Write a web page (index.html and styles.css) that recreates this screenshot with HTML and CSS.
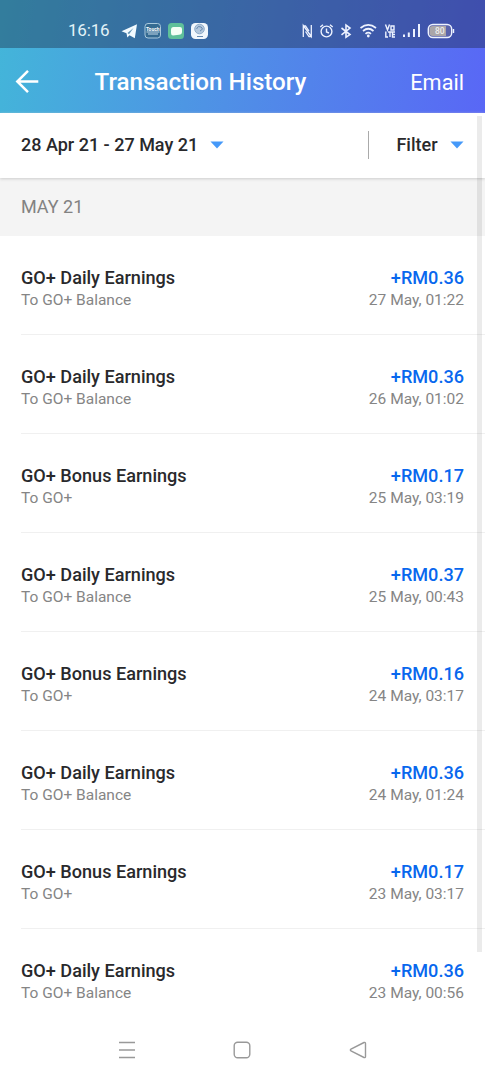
FILE: index.html
```html
<!DOCTYPE html>
<html lang="en">
<head>
<meta charset="utf-8">
<title>Transaction History</title>
<link rel="stylesheet" href="styles.css">
</head>
<body>
<div class="screen">
  <div class="top">
    <div class="status">
      <span class="clock">16:16</span>
      <svg class="notifications" width="88" height="20" viewBox="121 21 88 20">
        <path d="M121.500 31.200L137 24.300L134.800 38.300L129.500 35.200L127.300 37.500L126.500 33.200Z" fill="#f1faff"/>
        <path d="M127.500 33L133.500 28L129 34.300" fill="#5e91b3"/>
        <rect x="145" y="23.500" width="15.500" height="14.500" rx="3" fill="#356b92" stroke="#a9c9dc"/>
        <text x="152.800" y="30.500" class="app-label">Touch</text>
        <path d="M146.500 32H159.500M148 34H158" stroke="#c4d9e7" stroke-width="1.200"/>
        <rect x="168" y="23" width="16" height="16" rx="3.500" fill="#5fc09a"/>
        <path d="M173.500 27H180Q182 27 182 29V32Q182 34.500 179 34.800L173 35.500Q171 35.500 171 33V30Q171 27 173.500 27Z" fill="#f4fff5"/>
        <rect x="191" y="23" width="17" height="16" rx="4.500" fill="#f2f7fc"/>
        <circle cx="199.500" cy="29" r="4.800" fill="#b3c7dc" stroke="#8facc9"/>
        <path d="M196.500 29Q198 25 201 27T200 31M197 36.500H203" stroke="#6689b0" fill="none"/>
      </svg>
      <svg class="indicators" width="154" height="20" viewBox="301 21 154 20" fill="none" stroke="#edf2ff" stroke-width="1.400">
        <path d="M303.300 37V25.500L311.300 36.500V25M303.300 26H305.500L309 31M311.300 36.500H309L305.500 31.500" stroke-width="1.300"/>
        <circle cx="326.500" cy="31.500" r="5.400"/><path d="M326.500 28.500V32L329 33M320.300 27L323 24.800M330 24.800L332.700 27"/>
        <path d="M341.500 28L350 34.500L346 37.300V25L350 28L341.500 34.800" stroke-width="1.600"/>
        <path d="M360.500 28Q368.300 21.800 376 28M363 31Q368.300 26.500 373.500 31M365.500 33.800Q368.300 31.400 371 33.800" stroke-width="1.700"/><circle cx="368.300" cy="36" r="1.400" fill="#edf2ff" stroke="none"/>
        <path d="M385.500 24.500L387.500 30L389.500 24.500M391 26H394V30H391ZM385.800 31.500V37H388M388 32H392M390 32V37M395 32H392.500V37H395M392.500 34.500H395"/>
        <path d="M404 34.500V37M408.800 32.500V37M414 29V37M419 24V37" stroke-width="2"/>
        <rect x="428.300" y="24.500" width="23.400" height="13" rx="4.500" fill="#5a63ac"/>
        <path d="M432.500 26H446V36H432.500Q429.500 36 429.500 33V29Q429.500 26 432.500 26Z" fill="#aaa6a9" stroke="none"/>
        <path d="M453.500 29V33"/><text x="439.800" y="34.200" class="battery-level">80</text>
      </svg>
    </div>
    <header class="header">
      <svg class="back" width="26" height="26" viewBox="14 69 26 26" fill="none" stroke="white" stroke-width="2.500"><path d="M38.300 81.500H17.500M28 70.800L17.300 81.500L28 92.200"/></svg>
      <h1>Transaction History</h1><span class="email">Email</span>
    </header>
  </div>
  <div class="filters">
    <span class="range">28 Apr 21 - 27 May 21</span><svg class="arrow" viewBox="0 0 14 8"><path d="M.5 .5H13.500L7 7.500Z"/></svg>
    <span class="divider"></span><span class="filter">Filter</span><svg class="arrow" viewBox="0 0 14 8"><path d="M.5 .5H13.500L7 7.500Z"/></svg>
  </div>
  <h2 class="month">MAY 21</h2>
  <main class="list">
    <article class="row"><div><b>GO+ Daily Earnings</b><small>To GO+ Balance</small></div><div class="amount"><b>+RM0.36</b><small>27 May, 01:22</small></div></article>
    <article class="row"><div><b>GO+ Daily Earnings</b><small>To GO+ Balance</small></div><div class="amount"><b>+RM0.36</b><small>26 May, 01:02</small></div></article>
    <article class="row"><div><b>GO+ Bonus Earnings</b><small>To GO+</small></div><div class="amount"><b>+RM0.17</b><small>25 May, 03:19</small></div></article>
    <article class="row"><div><b>GO+ Daily Earnings</b><small>To GO+ Balance</small></div><div class="amount"><b>+RM0.37</b><small>25 May, 00:43</small></div></article>
    <article class="row"><div><b>GO+ Bonus Earnings</b><small>To GO+</small></div><div class="amount"><b>+RM0.16</b><small>24 May, 03:17</small></div></article>
    <article class="row"><div><b>GO+ Daily Earnings</b><small>To GO+ Balance</small></div><div class="amount"><b>+RM0.36</b><small>24 May, 01:24</small></div></article>
    <article class="row"><div><b>GO+ Bonus Earnings</b><small>To GO+</small></div><div class="amount"><b>+RM0.17</b><small>23 May, 03:17</small></div></article>
    <article class="row"><div><b>GO+ Daily Earnings</b><small>To GO+ Balance</small></div><div class="amount"><b>+RM0.36</b><small>23 May, 00:56</small></div></article>
  </main>
  <nav class="nav">
    <svg viewBox="0 0 18 18"><path d="M1 1.500H17M1 9H17M1 16.500H17"/></svg>
    <svg viewBox="0 0 18 18"><rect x="1.200" y="1.200" width="15.600" height="15.600" rx="3.500"/></svg>
    <svg viewBox="0 0 18 18"><path d="M15 1.500L2 8Q.7 9 2 10L15 16.500Q16.500 17 16.500 15.500V2.500Q16.500 1 15 1.500Z"/></svg>
  </nav>
  <div class="scrollbar"></div>
</div>
</body>
</html>
```
FILE: styles.css
```css
* { box-sizing: border-box; }
body { margin: 0; font-family: Roboto, "Liberation Sans", sans-serif; color: #29292c; background: #fff; }
svg { display: block; flex: none; }
h1, h2 { margin: 0; }
.screen { position: relative; width: 485px; height: 1080px; overflow: hidden; display: flex; flex-direction: column; }
.top { height: 113px; flex: none; background: linear-gradient(100deg, #43b6d9 0%, #4f90e6 48%, #5967f6 100%); }
.status { height: 48px; padding: 12px 30px 0 68px; display: flex; align-items: center; background: rgba(25, 35, 62, .39); }
.clock { width: 53px; font-size: 17px; line-height: 20px; color: #e2f3f8; letter-spacing: -.2px; }
.notifications { margin-top: 1px; }
.indicators { margin: 1px 0 0 auto; }
.app-label { font: 700 5px Roboto, sans-serif; fill: #fff; text-anchor: middle; }
.battery-level { font: 500 8.5px Roboto, sans-serif; fill: #eee; stroke: none; text-anchor: middle; }
.header { height: 65px; display: flex; align-items: center; padding: 2px 21px 0 14px; color: #fff; white-space: nowrap; }
.header h1 { margin-left: 54.5px; font-size: 24.2px; font-weight: 500; line-height: 30px; }
.email { margin: 2px 0 0 auto; font-size: 21.7px; line-height: 30px; }
.filters { position: relative; height: 65px; flex: none; display: flex; align-items: center; padding: 0 21.5px 1px 21px; font-size: 18px; line-height: 22px; font-weight: 500; background: #fff; box-shadow: 0 1px 3px #ccc; z-index: 1; }
.range, .filter { padding-bottom: 1px; }
.arrow { width: 14px; height: 8px; margin-left: 12px; fill: #4599f9; }
.divider { width: 1px; height: 28px; margin-left: auto; margin-right: 27.5px; background: #aaa; }
.month { height: 58px; flex: none; padding: 0 21px; font-size: 18px; font-weight: 400; line-height: 58px; color: #828282; background: #f4f4f4; }
.list { height: 794px; flex: none; }
.row { height: 99px; margin-left: 21px; padding: 31px 21px 0 0; display: flex; justify-content: space-between; border-bottom: 1px solid #f0f0f0; }
.row:last-child { border: 0; }
.row b, .row small { display: block; white-space: nowrap; }
.row b { font-size: 18.1px; font-weight: 500; line-height: 22px; }
.row small { font-size: 15.5px; line-height: 22px; color: #858585; }
.amount { text-align: right; }
.amount b { color: #0867ee; }
.nav { height: 50px; display: flex; justify-content: space-between; padding: 11px 118px 0 117.5px; background: #fff; }
.nav svg { width: 18px; height: 18px; fill: none; stroke: #999; stroke-width: 1.400; }
.scrollbar { position: absolute; right: 3px; top: 116px; width: 5px; height: 836px; background: rgba(0, 0, 0, .08); z-index: 2; }
```
